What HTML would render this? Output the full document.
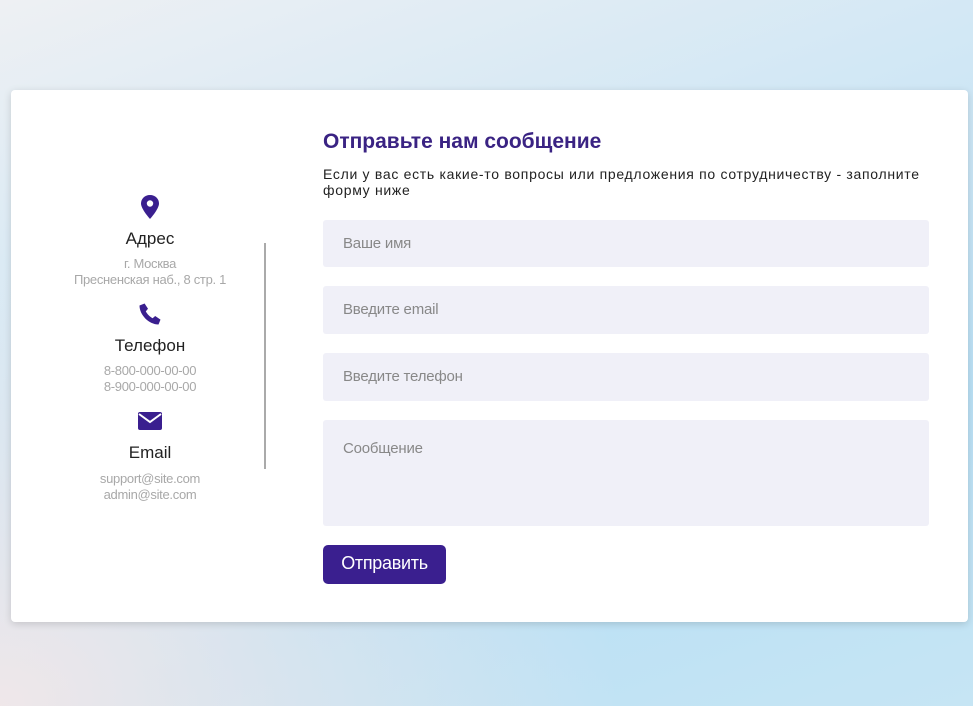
<!DOCTYPE html>
<html><head><meta charset="utf-8"><style>
*{margin:0;padding:0;box-sizing:border-box}
body{width:973px;height:706px;overflow:hidden;font-family:"Liberation Sans",sans-serif;
background:linear-gradient(160deg,#eef0f3 0%,#d3e8f5 35%,#bae0f5 70%,#c6e5f4 100%);position:relative}
.bg2{position:absolute;inset:0;background:radial-gradient(ellipse at 0% 100%,rgba(245,232,232,.9),rgba(245,232,232,0) 45%)}
.card{position:absolute;left:11px;top:90px;width:957px;height:532px;background:#fff;border-radius:4px;box-shadow:0 2px 8px rgba(0,0,0,.15)}
.c{position:absolute;left:0;width:278px;text-align:center}
.t{font-size:17px;color:#222}
.s{font-size:13px;color:#a8a8a8;line-height:16px;letter-spacing:-0.3px}
.line{position:absolute;left:253px;top:153px;width:2px;height:226px;background:#aaa}
h2{position:absolute;left:312px;top:40px;font-size:21px;color:#3a2383;font-weight:bold}
.p{position:absolute;left:312px;top:76px;width:660px;font-size:14px;color:#222;line-height:16px;letter-spacing:0.7px}
.in{position:absolute;left:312px;width:606px;background:#f0f0f8;border-radius:3px;font-size:15px;color:#888;padding-left:20px;letter-spacing:-0.2px}
.btn{position:absolute;left:312px;top:455px;width:123px;height:39px;background:#3a1f8f;border-radius:5px;color:#fff;font-size:18px;text-align:center;line-height:37px;letter-spacing:-0.3px}
</style></head><body><div class="bg2"></div>
<div class="card">
<svg style="position:absolute;left:129px;top:105px" width="20" height="24" viewBox="0 0 20 24"><path d="M10 0C4.5 0 1 4 1 8.5 1 14 10 24 10 24S19 14 19 8.5C19 4 15.5 0 10 0z" fill="#3a1f8f"/><circle cx="10" cy="8.5" r="3.2" fill="#fff"/></svg>
<div class="c t" style="top:139px">Адрес</div>
<div class="c s" style="top:166px">г. Москва<br>Пресненская наб., 8 стр. 1</div>
<svg style="position:absolute;left:127px;top:212px" width="24" height="24" viewBox="0 0 24 24"><path d="M6.6 1.5 10 6.8 7.8 9.4C9.2 12.2 11.8 14.8 14.6 16.2L17.2 14 22.5 17.6 20.5 22.5C11 22.5 1.5 13 1.5 3.5Z" fill="#3a1f8f"/></svg>
<div class="c t" style="top:246px">Телефон</div>
<div class="c s" style="top:273px">8-800-000-00-00<br>8-900-000-00-00</div>
<svg style="position:absolute;left:127px;top:322px" width="24" height="18" viewBox="0 0 24 18"><rect x="0" y="0" width="24" height="18" rx="2" fill="#3a1f8f"/><path d="M1 2 12 10 23 2" stroke="#fff" stroke-width="2" fill="none"/></svg>
<div class="c t" style="top:353px">Email</div>
<div class="c s" style="top:381px">support@site.com<br>admin@site.com</div>
<div class="line"></div>
<h2>Отправьте нам сообщение</h2>
<div class="p">Если у вас есть какие-то вопросы или предложения по сотрудничеству - заполните<br>форму ниже</div>
<div class="in" style="top:130px;height:47px;line-height:47px">Ваше имя</div>
<div class="in" style="top:196px;height:48px;line-height:48px">Введите email</div>
<div class="in" style="top:263px;height:48px;line-height:48px">Введите телефон</div>
<div class="in" style="top:330px;height:106px;padding-top:20px">Сообщение</div>
<div class="btn">Отправить</div>
</div>
</body></html>
